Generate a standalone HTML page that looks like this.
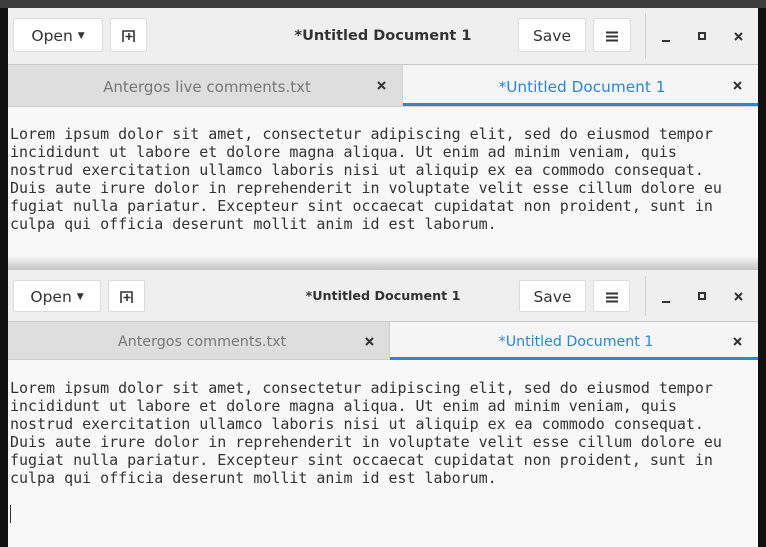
<!DOCTYPE html>
<html><head><style>
*{margin:0;padding:0;box-sizing:border-box}
body{width:766px;height:547px;background:#111;position:relative;overflow:hidden;font-family:"DejaVu Sans","Liberation Sans",sans-serif}
.top{position:absolute;left:0;top:0;width:766px;height:8px;background:#3c3c3c}
.win{position:absolute;left:8px;width:750px;background:#f8f8f8;overflow:hidden}
.hdr{position:absolute;left:0;top:0;width:750px;background:#efefef;border-bottom:1px solid #c8c8c8}
.btn{position:absolute;background:#fff;border:1px solid #dcdcdc;border-radius:2px;color:#333;font-size:15.5px;display:flex;align-items:center;justify-content:center;padding-top:2px}
.title{position:absolute;font-weight:bold;color:#333;transform:translateX(-50%);white-space:nowrap}
.tabs{position:absolute;left:0;width:750px;background:#f5f5f5;border-bottom:1px solid #d0d0d0}
.tin{position:absolute;left:0;top:0;bottom:0;background:#dedede;border-right:1px solid #cfcfcf}
.tt{position:absolute;transform:translateX(-50%);white-space:nowrap}
.xi{position:absolute}
.bl{position:absolute;height:3px;background:#2a86d6}
pre{position:absolute;left:2px;font-family:"DejaVu Sans Mono",monospace;font-size:14.97px;line-height:18px;color:#333}
.sep{position:absolute;width:1px;background:#d2d2d2}
</style></head><body>
<div class="top"></div>

<div class="win" style="top:8px;height:254px">
 <div class="hdr" style="height:57px">
  <div class="btn" style="left:5px;top:10px;width:90px;height:34px">Open&nbsp;<span style="font-size:9px">▼</span></div>
  <div class="btn" style="left:102px;top:10px;width:37px;height:34px"><svg width="14" height="12" viewBox="0 0 14 12"><path d="M1 12V1h11v11" fill="none" stroke="#333" stroke-width="1.6"/><path d="M7 3v7M3.5 6.5h7" stroke="#333" stroke-width="1.6"/></svg></div>
  <div class="title" style="left:375px;top:20px;font-size:14.5px">*Untitled Document 1</div>
  <div class="btn" style="left:510px;top:10px;width:68px;height:34px">Save</div>
  <div class="btn" style="left:585px;top:10px;width:38px;height:34px"><svg width="12" height="11"><path d="M0 1.5h12M0 5.5h12M0 9.5h12" stroke="#333" stroke-width="2"/></svg></div>
  <div class="sep" style="left:637px;top:5px;height:46px"></div>
  <div style="position:absolute;left:654px;top:32px;width:8px;height:2px;background:#333"></div>
  <div style="position:absolute;left:690px;top:24px;width:8px;height:8px;border:2px solid #333"></div>
  <svg class="xi" style="left:726px;top:24px" width="9" height="9"><path d="M1 1l7 7M8 1l-7 7" stroke="#333" stroke-width="2"/></svg>
 </div>
 <div class="tabs" style="top:57px;height:42px">
  <div class="tin" style="width:395px"></div>
  <div class="tt" style="left:199px;top:13px;color:#777;font-size:15px">Antergos live comments.txt</div>
  <svg class="xi" style="left:369px;top:16px" width="9" height="9"><path d="M1 1l7 7M8 1l-7 7" stroke="#333" stroke-width="2"/></svg>
  <div class="tt" style="left:574px;top:13px;color:#2a86d6;font-size:15.3px">*Untitled Document 1</div>
  <svg class="xi" style="left:725px;top:16px" width="9" height="9"><path d="M1 1l7 7M8 1l-7 7" stroke="#333" stroke-width="2"/></svg>
  <div class="bl" style="left:395px;top:38px;width:355px"></div>
 </div>
<pre style="top:117px">Lorem ipsum dolor sit amet, consectetur adipiscing elit, sed do eiusmod tempor
incididunt ut labore et dolore magna aliqua. Ut enim ad minim veniam, quis
nostrud exercitation ullamco laboris nisi ut aliquip ex ea commodo consequat.
Duis aute irure dolor in reprehenderit in voluptate velit esse cillum dolore eu
fugiat nulla pariatur. Excepteur sint occaecat cupidatat non proident, sunt in
culpa qui officia deserunt mollit anim id est laborum.</pre>
</div>
<div style="position:absolute;left:8px;top:256px;width:750px;height:14px;background:linear-gradient(#f8f8f8,#c4c4c4)"></div>

<div class="win" style="top:270px;height:277px">
 <div class="hdr" style="height:52px">
  <div class="btn" style="left:5px;top:10px;width:88px;height:32px">Open&nbsp;<span style="font-size:9px">▼</span></div>
  <div class="btn" style="left:100px;top:10px;width:37px;height:32px"><svg width="14" height="12" viewBox="0 0 14 12"><path d="M1 12V1h11v11" fill="none" stroke="#333" stroke-width="1.6"/><path d="M7 3v7M3.5 6.5h7" stroke="#333" stroke-width="1.6"/></svg></div>
  <div class="title" style="left:375px;top:18px;font-size:12.7px">*Untitled Document 1</div>
  <div class="btn" style="left:511px;top:10px;width:67px;height:32px">Save</div>
  <div class="btn" style="left:585px;top:10px;width:37px;height:32px"><svg width="12" height="11"><path d="M0 1.5h12M0 5.5h12M0 9.5h12" stroke="#333" stroke-width="2"/></svg></div>
  <div class="sep" style="left:637px;top:6px;height:40px"></div>
  <div style="position:absolute;left:654px;top:31px;width:8px;height:2px;background:#333"></div>
  <div style="position:absolute;left:690px;top:22px;width:8px;height:8px;border:2px solid #333"></div>
  <svg class="xi" style="left:726px;top:22px" width="9" height="9"><path d="M1 1l7 7M8 1l-7 7" stroke="#333" stroke-width="2"/></svg>
 </div>
 <div class="tabs" style="top:52px;height:38px">
  <div class="tin" style="width:382px"></div>
  <div class="tt" style="left:194px;top:12px;color:#777;font-size:14.3px">Antergos comments.txt</div>
  <svg class="xi" style="left:357px;top:15px" width="9" height="9"><path d="M1 1l7 7M8 1l-7 7" stroke="#333" stroke-width="2"/></svg>
  <div class="tt" style="left:568px;top:12px;color:#2a86d6;font-size:14.2px">*Untitled Document 1</div>
  <svg class="xi" style="left:725px;top:15px" width="9" height="9"><path d="M1 1l7 7M8 1l-7 7" stroke="#333" stroke-width="2"/></svg>
  <div class="bl" style="left:382px;top:35px;width:368px"></div>
 </div>
<pre style="top:109px">Lorem ipsum dolor sit amet, consectetur adipiscing elit, sed do eiusmod tempor
incididunt ut labore et dolore magna aliqua. Ut enim ad minim veniam, quis
nostrud exercitation ullamco laboris nisi ut aliquip ex ea commodo consequat.
Duis aute irure dolor in reprehenderit in voluptate velit esse cillum dolore eu
fugiat nulla pariatur. Excepteur sint occaecat cupidatat non proident, sunt in
culpa qui officia deserunt mollit anim id est laborum.</pre>
 <div style="position:absolute;left:2px;top:235px;width:1px;height:18px;background:#333"></div>
</div>
</body></html>
